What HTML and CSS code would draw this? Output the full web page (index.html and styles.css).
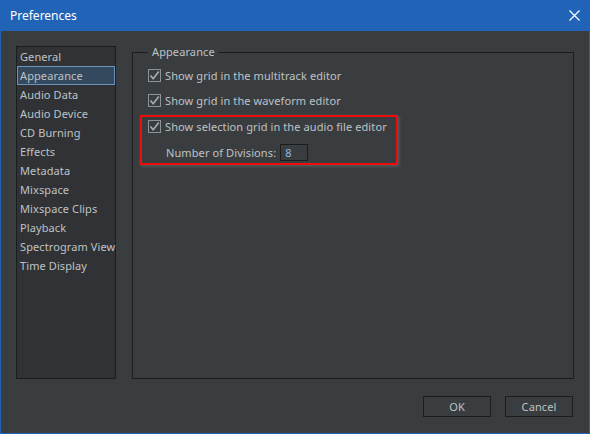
FILE: index.html
```html
<!DOCTYPE html>
<html>
<head>
    <title>Preferences</title>
    <meta charset="utf-8">
    <link rel="stylesheet" href="styles.css">
</head>
<body>
    <div class="window">
        <!-- Title bar -->
        <div class="titlebar">
            <span class="title">Preferences</span>
            <svg class="close" width="11" height="11" viewBox="0 0 11 11">
                <path d="M0.5 0.5 L10.5 10.5 M10.5 0.5 L0.5 10.5" stroke="#fff" stroke-width="1.2" fill="none"/>
            </svg>
        </div>

        <div class="content">
            <!-- Category list -->
            <ul class="category-list">
                <li>General</li>
                <li class="selected">Appearance</li>
                <li>Audio Data</li>
                <li>Audio Device</li>
                <li>CD Burning</li>
                <li>Effects</li>
                <li>Metadata</li>
                <li>Mixspace</li>
                <li>Mixspace Clips</li>
                <li>Playback</li>
                <li>Spectrogram View</li>
                <li>Time Display</li>
            </ul>

            <!-- Appearance page -->
            <fieldset class="group">
                <legend>Appearance</legend>
                <label class="check-row">
                    <span class="checkbox"><svg width="11" height="11" viewBox="0 0 11 11"><path d="M1.5 5.5 L4.2 8.8 L9.8 1.5" stroke="#a9adb1" stroke-width="1.6" fill="none"/></svg></span>
                    Show grid in the multitrack editor
                </label>
                <label class="check-row">
                    <span class="checkbox"><svg width="11" height="11" viewBox="0 0 11 11"><path d="M1.5 5.5 L4.2 8.8 L9.8 1.5" stroke="#a9adb1" stroke-width="1.6" fill="none"/></svg></span>
                    Show grid in the waveform editor
                </label>
                <div class="highlight">
                    <label class="check-row">
                        <span class="checkbox"><svg width="11" height="11" viewBox="0 0 11 11"><path d="M1.5 5.5 L4.2 8.8 L9.8 1.5" stroke="#a9adb1" stroke-width="1.6" fill="none"/></svg></span>
                        Show selection grid in the audio file editor
                    </label>
                    <div class="divisions-row">
                        <span>Number of Divisions:</span>
                        <span class="number-input">8</span>
                    </div>
                </div>
            </fieldset>
        </div>

        <!-- Dialog buttons -->
        <div class="footer">
            <button class="dlg-button">OK</button>
            <button class="dlg-button">Cancel</button>
        </div>
    </div>
</body>
</html>
```

FILE: styles.css
```css
:root {
    --titlebar: #2164b7;
    --panel: #3a3d40;
    --list-bg: #313235;
    --edge: #1b1d1f;
    --text: #bec2c6;
}

body {
    margin: 0;
    font-family: "Noto Sans", "Open Sans", sans-serif;
    font-size: 11px;
    letter-spacing: 0.1px;
    color: var(--text);
}

.window {
    width: 590px;
    height: 434px;
    box-sizing: border-box;
    background: var(--panel);
    border: 1px solid var(--titlebar);
    border-top: none;
    display: flex;
    flex-direction: column;
}

.titlebar {
    height: 31px;
    margin: 0 -1px;
    background: var(--titlebar);
    display: flex;
    align-items: center;
    justify-content: space-between;
    padding: 0 10px 0 10px;
}

.title {
    color: #fff;
    font-size: 12px;
    letter-spacing: 0;
    padding-bottom: 1px;
}

.content {
    height: 348px;
    display: flex;
    padding: 13px 15px 0 15px;
    box-sizing: border-box;
}

.category-list {
    list-style: none;
    margin: 2px 0 0 0;
    padding: 0;
    width: 100px;
    box-sizing: border-box;
    background: var(--list-bg);
    border: 1px solid var(--edge);
}

.category-list li {
    height: 19px;
    box-sizing: border-box;
    line-height: 17px;
    padding: 0 2px;
    border: 1px solid transparent;
    white-space: nowrap;
}

.category-list li.selected {
    background: #34495e;
    border-color: #6a93c2;
}

.group {
    flex: 1;
    margin: 0 0 0 16px;
    padding: 3px 15px 0 15px;
    border: 1px solid var(--edge);
    min-width: 0;
}

.group legend {
    padding: 0 4px;
    line-height: 16px;
}

.check-row {
    display: flex;
    align-items: center;
    height: 25px;
    gap: 4px;
    white-space: nowrap;
}

.checkbox {
    width: 11px;
    height: 11px;
    border: 1px solid #8d9297;
    display: flex;
}

.highlight {
    margin: 2px 0 0 -8px;
    width: 258px;
    box-sizing: border-box;
    padding: 0 0 0 6px;
    border: 2px solid #ee0d0d;
    box-shadow: 1px 1px 3px rgba(140, 140, 140, 0.5);
}

.highlight .check-row {
    height: 18px;
}

.divisions-row {
    display: flex;
    align-items: center;
    gap: 4px;
    margin: 9px 0 2px 18px;
    height: 17px;
}

.number-input {
    width: 28px;
    height: 17px;
    box-sizing: border-box;
    border: 1px solid var(--edge);
    color: #8fb6ea;
    padding-left: 4px;
    line-height: 15px;
}

.footer {
    display: flex;
    justify-content: flex-end;
    gap: 14px;
    padding: 17px 16px 0 0;
}

.dlg-button {
    width: 68px;
    height: 21px;
    background: var(--panel);
    border: 1px solid var(--edge);
    color: var(--text);
    font-family: inherit;
    font-size: 11px;
    letter-spacing: 0.1px;
    padding: 0;
}
```
